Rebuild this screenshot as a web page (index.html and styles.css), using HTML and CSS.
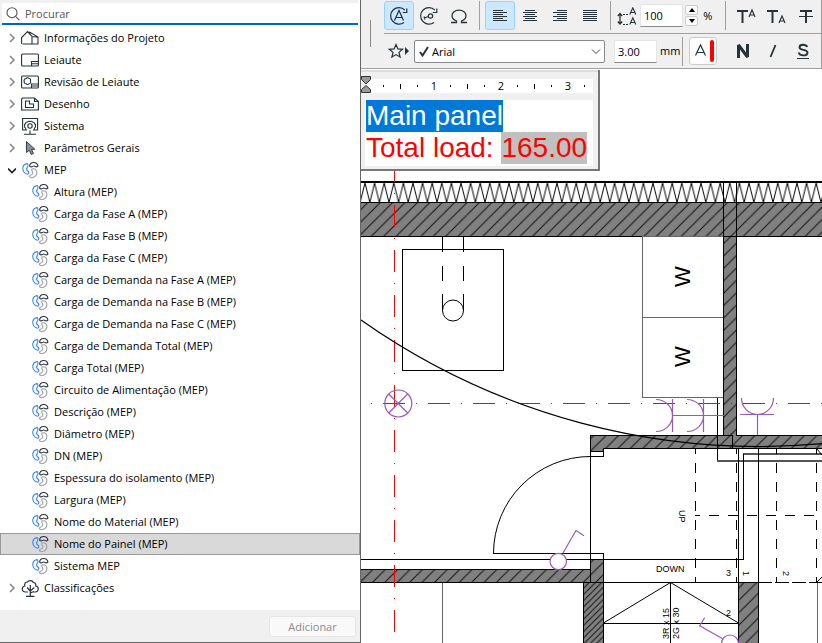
FILE: index.html
```html
<!DOCTYPE html>
<html lang="pt-BR">
<head>
<meta charset="utf-8">
<title>Texto automático</title>
<link rel="stylesheet" href="styles.css">
</head>
<body>
<svg class="defs" aria-hidden="true">
  <symbol id="chev" viewBox="0 0 8 10"><path d="M2 1l4 4-4 4" fill="none" stroke="#8a8a8a" stroke-width="1.6"/></symbol>
  <symbol id="mep" viewBox="0 0 18 18" fill="none" stroke-width="1.1">
    <path d="M6 2.600C3 3.200 1.600 5.500 1.800 8c.3 2.800 2.300 4.700 5 5.200 1-.6 1.200-1.800.6-2.800C5.800 9.500 5.200 8.300 5.900 7c1-1.500 1.500-2.500 1-3.600-.2-.5-.5-.8-.9-.8z" stroke="#3b82f6"/>
    <path d="M8.600 5.200C8.800 2.900 10.500 1.500 12.700 1.500S16.500 2.900 16.900 5.200c-1 .9-2 .9-3 .2-.8-.5-1.500-.5-2.300 0-1.100.7-2.100.7-3-.2z" stroke="#263238"/>
    <path d="M10.800 8c2-.8 4.500.2 5 2.700.6 2.800-1.500 5.800-5 6-1.300 0-2.300-.6-2.500-1.600.3-.9 1.200-1.100 2.200-1.300 1.200-.5 1.600-1.300 1.300-2.300-.3-1-1.500-2-1-3.500z" stroke="#a0a0a0"/>
  </symbol>
</svg>
<main class="app">
  <aside class="panel">
    <label class="search">
      <svg width="14" height="14" viewBox="0 0 14 14" fill="none" stroke="#555" stroke-width="1.100"><circle cx="6" cy="5.700" r="5"/><path d="M9.500 9.300l3.800 3.900"/></svg>
      <input type="text" placeholder="Procurar" aria-label="Procurar">
    </label>
    <ul class="tree">
      <li><button class="row"><svg class="chev"><use href="#chev"/></svg><svg class="ico" viewBox="0 0 18 18" fill="none" stroke="#263238" stroke-width="1.100"><path d="M.6 15V8.500L6.500 2.600 11 7.500V15H1.500M11 15h6V8L9 3.300H6.500M11 7.500L8 3.500M11 7.500l6 .8"/></svg>Informações do Projeto</button></li>
      <li><button class="row"><svg class="chev"><use href="#chev"/></svg><svg class="ico" viewBox="0 0 18 18" fill="none" stroke="#263238" stroke-width="1.100"><rect x=".6" y="3" width="16.800" height="12" rx="1"/><path d="M10.500 15v-4.500H17M10.500 12.700H17"/></svg>Leiaute</button></li>
      <li><button class="row"><svg class="chev"><use href="#chev"/></svg><svg class="ico" viewBox="0 0 18 18" fill="none" stroke="#263238" stroke-width="1.100"><rect x=".6" y="3" width="16.800" height="12" rx="1"/><path d="M10.500 15v-4H17M10.500 13H17M5 5.500c1-1 2.500-1 3.200 0 1 0 1.800 1.200 1.200 2.500.8 1.200 0 2.500-1.300 2.700-.7 1.100-2.400 1.100-3 .1C3.500 10.800 2.800 9.500 3.300 8.300 2.600 7 3.500 5.500 5 5.500z"/></svg>Revisão de Leiaute</button></li>
      <li><button class="row"><svg class="chev"><use href="#chev"/></svg><svg class="ico" viewBox="0 0 18 18" fill="none" stroke="#263238" stroke-width="1.100"><path d="M1.600 3h11.800l4 3.500V15H.6V4zM13.500 3v3.500h3.900M4.500 6h4v3h4v3.500h-8z"/></svg>Desenho</button></li>
      <li><button class="row"><svg class="chev"><use href="#chev"/></svg><svg class="ico" viewBox="0 0 18 18" fill="none" stroke="#263238" stroke-width="1.100"><path d="M5 13H1.600V1.500h15V13H13M9 13.500v3.500M3 17.300h12"/><circle cx="9" cy="9" r="2.200"/><path d="M6 13.200c-1.200-.2-1.600-1-1.400-2-1-.6-1.400-1.400-.9-2.400-.5-1-.1-1.900.9-2.200.1-1.100.8-1.700 1.900-1.500.6-.9 1.600-1.200 2.500-.6.900-.6 1.900-.3 2.500.6 1.100-.2 1.800.4 1.900 1.500 1 .3 1.400 1.200.9 2.200.5 1 .1 1.800-.9 2.400.2 1-.2 1.800-1.400 2"/></svg>Sistema</button></li>
      <li><button class="row"><svg class="chev"><use href="#chev"/></svg><svg class="ico" viewBox="0 0 18 18" fill="#8a8f94" stroke="#3a4248" stroke-width="1"><path d="M5.500 2.500v11l2.700-2.300 2 4.300 2.300-1-2-4.200h3.400z"/></svg>Parâmetros Gerais</button></li>
      <li><button class="row" aria-expanded="true"><svg class="chev" viewBox="0 0 8 10"><path d="M0 3.500l4 4 4-4" fill="none" stroke="#222" stroke-width="1.700"/></svg><svg class="ico"><use href="#mep"/></svg>MEP</button>
        <ul class="sub">
          <li><button class="row"><svg class="ico"><use href="#mep"/></svg>Altura (MEP)</button></li>
          <li><button class="row"><svg class="ico"><use href="#mep"/></svg>Carga da Fase A (MEP)</button></li>
          <li><button class="row"><svg class="ico"><use href="#mep"/></svg>Carga da Fase B (MEP)</button></li>
          <li><button class="row"><svg class="ico"><use href="#mep"/></svg>Carga da Fase C (MEP)</button></li>
          <li><button class="row"><svg class="ico"><use href="#mep"/></svg>Carga de Demanda na Fase A (MEP)</button></li>
          <li><button class="row"><svg class="ico"><use href="#mep"/></svg>Carga de Demanda na Fase B (MEP)</button></li>
          <li><button class="row"><svg class="ico"><use href="#mep"/></svg>Carga de Demanda na Fase C (MEP)</button></li>
          <li><button class="row"><svg class="ico"><use href="#mep"/></svg>Carga de Demanda Total (MEP)</button></li>
          <li><button class="row"><svg class="ico"><use href="#mep"/></svg>Carga Total (MEP)</button></li>
          <li><button class="row"><svg class="ico"><use href="#mep"/></svg>Circuito de Alimentação (MEP)</button></li>
          <li><button class="row"><svg class="ico"><use href="#mep"/></svg>Descrição (MEP)</button></li>
          <li><button class="row"><svg class="ico"><use href="#mep"/></svg>Diâmetro (MEP)</button></li>
          <li><button class="row"><svg class="ico"><use href="#mep"/></svg>DN (MEP)</button></li>
          <li><button class="row"><svg class="ico"><use href="#mep"/></svg>Espessura do isolamento (MEP)</button></li>
          <li><button class="row"><svg class="ico"><use href="#mep"/></svg>Largura (MEP)</button></li>
          <li><button class="row"><svg class="ico"><use href="#mep"/></svg>Nome do Material (MEP)</button></li>
          <li><button class="row selected"><svg class="ico"><use href="#mep"/></svg>Nome do Painel (MEP)</button></li>
          <li><button class="row"><svg class="ico"><use href="#mep"/></svg>Sistema MEP</button></li>
        </ul>
      </li>
      <li><button class="row"><svg class="chev"><use href="#chev"/></svg><svg class="ico" viewBox="0 0 18 18" fill="none" stroke="#263238" stroke-width="1.200"><path d="M7 13H4.500C2.500 13 1.300 11.700 1.300 10S2.500 7.200 3.800 7C3 4.500 5 2.800 6.500 3 7.500 1.200 11.500 1.200 12.300 3.500c2 0 3 1.800 2.400 3.500 1.600.2 2.600 1.500 2.600 3s-1.300 3-3 3H11.500M9.300 6v11M5 17.300h8.500M9.300 12L6 8.500M9.300 12l4-3.500M9.300 14l3.500-1.500"/></svg>Classificações</button></li>
    </ul>
    <footer class="foot"><button class="add" disabled>Adicionar</button></footer>
  </aside>

  <section class="work">
    <svg class="plan" viewBox="361 0 461 643" preserveAspectRatio="xMinYMin slice" fill="none" stroke="#000" aria-label="Planta">
      <defs>
        <pattern id="hatch" width="12.400" height="12.400" patternUnits="userSpaceOnUse"><path fill="#808080" stroke="none" d="M0 0h13v13H0z"/><path stroke="#111" d="M-1 13.400L13.400-1M-1 1L1-1M11.400 13.400l2-2"/></pattern>
        <pattern id="dense" width="6.200" height="6.200" patternUnits="userSpaceOnUse"><path fill="#808080" stroke="none" d="M0 0h7v7H0z"/><path stroke="#111" d="M-1 7.200L7.200-1M-1 1L1-1M5.200 7.200l2-2"/></pattern>
        <pattern id="insul" x="360.200" y="183" width="9.600" height="20" patternUnits="userSpaceOnUse"><path stroke="#000" stroke-linejoin="bevel" d="M-4.800 0L0 19.500 4.800 0l4.800 19.500L14.400 0"/></pattern>
      </defs>
      <path fill="url(#insul)" stroke="none" d="M361 183h461v19.500H361z"/>
      <path stroke-width="2" d="M361 182h461"/>
      <path fill="url(#hatch)" stroke="none" d="M361 203h461v33H361z"/>
      <path fill="url(#hatch)" stroke="none" d="M723 236h13v200h-13zM590 435h232v13H603v3h-13zM361 570h230v-11h12v23H361zM738 582h20v61h-20z"/>
      <path fill="url(#dense)" stroke="none" d="M583 583h20v60h-20z"/>
      <g shape-rendering="crispEdges">
        <path d="M361 202.500h461M361 236.500h461M723.500 182v254M736.500 182v254"/>
        <path d="M402.500 249.500h101v121h-101zM442.500 237v15m0 14v15m0 13v17M463.500 237v15m0 14v15m0 13v17"/>
        <path stroke="#666" d="M723 236.500h-80.500v161H723M642.500 317.500H723M442.500 583v60M817.500 583v60"/>
        <path d="M717.500 398v62M590.500 435.500h133M736.500 435.500H822M603 448.500h219M732.500 435v13M723 435.500h9M590.500 435v148M590 451.500h13.500M590 456.500h13.500M603.500 448v8"/>
        <path stroke="#555" stroke-width="2" d="M717 461h105M743 454h79"/>
        <path d="M743.500 454v105.500H603M738.500 448v195M758.500 448v195M493 553.500h110.500V643M591 559.500h12M361 559.500h230M361 569.500h230M361 582.500h398M583.500 582v61M603 623.500h135.500M670.500 582v61"/>
        <path stroke-dasharray="10 9" stroke-dashoffset="5" d="M695.500 449v134M736.500 449v134M776.500 449v134M816.500 449v134M695 515.500h127"/>
        <path stroke-dasharray="14 3" d="M758 582.500h64"/>
        <path stroke="#f00" stroke-dasharray="1 11 22 11" d="M371 403.500h451"/>
        <path stroke="#f00" stroke-dasharray="22 11 1 11" stroke-dashoffset="11" d="M394.500 171v462"/>
      </g>
      <circle cx="453" cy="310.500" r="10.500"/>
      <path stroke-width="1.200" d="M361 320A692.500 692.500 0 0 0 822 443.700"/>
      <path d="M590.500 456.500A97 97 0 0 0 493.500 553.500M603.500 623l67-40.500 68 40.500M817 449l5 6M817 582l5-5"/>
      <g stroke="#9b59b6" stroke-width="1.200">
        <circle cx="398.300" cy="403.500" r="13.500"/>
        <path d="M388.700 394l19 19m0-19l-19 19"/>
        <path d="M656 399.500A16.500 16 0 0 1 672.500 415.500 16.500 16 0 0 1 656 431.500M687 399.500A16.500 16 0 0 1 703.500 415.500 16.500 16 0 0 1 687 431.500M672.500 399v33M703.500 399v33M672.500 415.500H724M741.500 398A16 16.500 0 0 0 757.500 414.500 16 16.500 0 0 0 773.500 398M740 414.500h34M757.500 414.500V435"/>
        <circle cx="558.300" cy="561.500" r="8.200" fill="#fff"/>
        <path d="M562.700 553.500l13.300-23 8 5.200M722.700 638.700l-23-13 5-8"/>
        <circle cx="730" cy="643.500" r="8.500"/>
      </g>
      <g class="note">
        <text class="big" transform="translate(690 287) rotate(-90)">W</text>
        <text class="big" transform="translate(690 367) rotate(-90)">W</text>
        <text x="656" y="572">DOWN</text>
        <text transform="translate(679 510) rotate(90)">UP</text>
        <text x="726" y="576">3</text>
        <text x="726" y="616">2</text>
        <text transform="translate(743 571) rotate(90)">1</text>
        <text transform="translate(783 571) rotate(90)">2</text>
        <text transform="translate(669 639) rotate(-90)">3R x 15</text>
        <text transform="translate(679 639) rotate(-90)">2G x 30</text>
      </g>
    </svg>

    <div class="toolbar">
      <span class="grip"></span>
      <div class="lines">
        <div class="line first">
          <button class="tool on" aria-label="Girar texto"><svg width="20" height="20" viewBox="0 0 20 20" fill="none" stroke="#263238" stroke-width="1.200"><path d="M15.800 4A8.300 8.300 0 1 0 15 16.500M5.500 14.500L10 4.500l4.500 10M7 11.500h6M17.800 2.500v4h-4"/></svg></button>
          <button class="tool" aria-label="Girar símbolo"><svg width="20" height="20" viewBox="0 0 20 20" fill="none" stroke="#263238" stroke-width="1.200"><path d="M15.800 4A8.300 8.300 0 1 0 15 16.500M17.800 2.500v4h-4M5 12l4.500-1.500M5 10.500l1 3"/><circle cx="11.500" cy="10" r="2.200"/></svg></button>
          <button class="tool" aria-label="Símbolo"><svg width="20" height="20" viewBox="0 0 20 20" fill="none" stroke="#263238" stroke-width="1.300"><path d="M2 16.500h5.500V15C4.500 13.800 3 12 3 9.700c0-3.200 3-5.500 7-5.500s7 2.300 7 5.500c0 2.300-1.500 4.100-4.500 5.300v1.500H18"/></svg></button>
          <i class="sep"></i>
          <button class="tool on" aria-label="Esquerda"><svg width="16" height="14" stroke="#263238"><path d="M1 1.500h10M1 3.500h14M1 5.500h10M1 7.500h14M1 9.500h10M1 11.500h14"/></svg></button>
          <button class="tool" aria-label="Centro"><svg width="16" height="14" stroke="#263238"><path d="M3 1.500h10M1 3.500h14M3 5.500h10M1 7.500h14M3 9.500h10M1 11.500h14"/></svg></button>
          <button class="tool" aria-label="Direita"><svg width="16" height="14" stroke="#263238"><path d="M5 1.500h10M1 3.500h14M5 5.500h10M1 7.500h14M5 9.500h10M1 11.500h14"/></svg></button>
          <button class="tool" aria-label="Justificar"><svg width="16" height="14" stroke="#263238"><path d="M1 1.500h14M1 3.500h14M1 5.500h14M1 7.500h14M1 9.500h14M1 11.500h14"/></svg></button>
          <i class="sep"></i>
          <svg class="lead" width="20" height="18" viewBox="0 0 20 18" fill="none" stroke="#263238"><path stroke-width="1.300" d="M3 7v10M.8 9L3 6.500 5.200 9M.8 14.500L3 17l2.200-2.500"/><path stroke-dasharray="2 1" d="M6 7.500h6M6 17.500h6"/><path stroke-width="1.100" d="M12.800 7.500L15.800.8l3 6.700M13.800 5.500h4M12.800 17.500l3-6.700 3 6.700M13.800 15.500h4"/></svg>
          <input class="num" type="text" value="100" aria-label="Espaçamento">
          <span class="spin"><button aria-label="Aumentar"><svg width="6" height="4"><path d="M0 4l3-4 3 4z"/></svg></button><button aria-label="Diminuir"><svg width="6" height="4"><path d="M0 0l3 4 3-4z"/></svg></button></span>
          <span class="unit">%</span>
          <i class="sep"></i>
          <button class="tool style" aria-label="Sobrescrito"><svg width="20" height="16" viewBox="0 0 20 16" fill="none" stroke="#263238"><path stroke-width="2" d="M1 3h11M6.500 3v12"/><path stroke-width="1.200" d="M13 9l3-7 3 7M14 7h4"/></svg></button>
          <button class="tool style" aria-label="Subscrito"><svg width="20" height="16" viewBox="0 0 20 16" fill="none" stroke="#263238"><path stroke-width="2" d="M1 3h11M6.500 3v12"/><path stroke-width="1.200" d="M13 15l3-7 3 7M14 13h4"/></svg></button>
          <button class="tool style" aria-label="Tachado"><svg width="16" height="16" viewBox="0 0 16 16" fill="none" stroke="#263238"><path stroke-width="2" d="M2 3h12M8 3v12"/><path d="M1 8.500h14"/></svg></button>
        </div>
        <div class="line second">
          <button class="tool" aria-label="Favoritos"><svg width="22" height="16" viewBox="0 0 22 16" fill="none" stroke="#263238"><path stroke-width="1.200" d="M8 1.500l1.900 4.400 4.700.4-3.600 3.100 1.100 4.700L8 11.600l-4.100 2.500L5 9.400 1.400 6.300l4.700-.4z"/><path fill="#263238" stroke="none" d="M17 4l4 4-4 4z"/></svg></button>
          <span class="font">
            <svg class="check" width="10" height="11" viewBox="0 0 10 11" fill="none" stroke="#263238" stroke-width="2"><path d="M1 6l2.500 3.500L9 1"/></svg>
            <select aria-label="Fonte"><option>Arial</option></select>
            <svg class="drop" width="10" height="6" viewBox="0 0 10 6" fill="none" stroke="#444"><path d="M1 .5l4 4 4-4"/></svg>
          </span>
          <input class="num" type="text" value="3.00" aria-label="Altura">
          <span class="unit">mm</span>
          <i class="sep"></i>
          <button class="pen" aria-label="Cor da caneta"><svg width="26" height="26" viewBox="0 0 26 26" fill="none" stroke="#263238"><path stroke-width="1.200" d="M5.500 17.500L10.500 7l5 10.500M7 14.500h7"/><path stroke="#f00" stroke-width="4" stroke-linecap="round" d="M22 4v18"/></svg></button>
          <button class="tool style" aria-label="Negrito"><svg width="16" height="16" viewBox="0 0 16 16" fill="none" stroke="#263238"><path stroke-width="3" stroke-linejoin="bevel" d="M3.500 15V2l9 12V1"/></svg></button>
          <button class="tool style" aria-label="Itálico"><svg width="16" height="16" viewBox="0 0 16 16" fill="none" stroke="#263238"><path stroke-width="1.800" d="M10.500 2l-5 12"/></svg></button>
          <button class="tool style" aria-label="Sublinhado"><svg width="16" height="18" viewBox="0 0 16 18" fill="none" stroke="#263238"><path stroke-width="1.900" d="M12.200 5C11.500 3.300 10 2.800 8.200 2.800 6 2.800 4.500 3.700 4.500 5.300c0 3.600 8 1.600 8 5.400 0 1.700-1.700 2.700-4.200 2.700-2.300 0-4-.9-4.600-2.900"/><path d="M2 16.500h12"/></svg></button>
        </div>
      </div>
    </div>

    <div class="editor">
      <div class="ruler">
        <svg class="stop" width="10" height="18" viewBox="0 0 10 18" fill="#999" stroke="#333"><path d="M.5.5h9v3L5 8 .5 3.500zM.5 16.500h9v-3L5 9.500.5 13.500z"/></svg>
        <span></span><b></b><span></span><em>1</em><span></span><b></b><span></span><em>2</em><span></span><b></b><span></span><em>3</em><span></span>
      </div>
      <div class="ticks"><i></i><i></i><i></i></div>
      <div class="text" contenteditable="true" spellcheck="false"><p><mark>Main panel</mark></p><p>Total load: <span class="field">165.00</span></p></div>
    </div>
  </section>
</main>
</body>
</html>
```
FILE: styles.css
```css
* { box-sizing: border-box; }
body { margin: 0; font: 11px/22px "Open Sans", "Noto Sans", sans-serif; color: #000; background: #fff; }
button, input, select { font: inherit; color: inherit; margin: 0; padding: 0; border: 0; background: none; }
ul { list-style: none; margin: 0; padding: 0; }
svg { display: block; flex: none; }
.defs { position: absolute; width: 0; height: 0; }
.app { display: flex; min-height: 100vh; }

/* property tree */
.panel { flex: 0 0 361px; display: flex; flex-direction: column; border-right: 1px solid #666; border-bottom: 1px solid #666; }
.search { display: flex; align-items: center; gap: 5px; height: 25px; margin-right: 2px; padding: 0 4px; border: solid #f0f0f0; border-width: 3px 0 0 2px; position: relative; }
.search::after { content: ""; position: absolute; inset: auto 0 0 0; height: 2px; background: #0067c0; }
.search input { flex: 1; min-width: 0; outline: 0; height: 20px; }
.search input::placeholder { color: #555; opacity: 1; }
.tree { flex: 1; padding: 2px 0 11px; }
.row { display: flex; align-items: center; width: 100%; height: 22px; padding: 0 0 0 7px; border: 1px solid transparent; white-space: nowrap; text-align: left; }
.chev { width: 8px; height: 10px; margin-right: 5px; }
.ico { width: 18px; height: 18px; margin-right: 5px; }
.sub .row { padding-left: 30px; }
.row.selected { background: #d9d9d9; border-color: #999; }
.foot { background: #f0f0f0; padding: 6px 4px 5px; display: flex; justify-content: flex-end; }
.add { width: 87px; height: 21px; line-height: 18px; border: 1px solid #e5e5e5; border-radius: 3px; background: #f9f9f9; color: #8c8c8c; }

/* drawing and text tools */
.work { flex: 1; min-width: 0; position: relative; }
.plan { position: absolute; inset: 0; width: 100%; height: 100%; }
.note { font: 9px "Liberation Sans", sans-serif; fill: #000; stroke: none; }
.note .big { font-size: 22px; }
.toolbar { position: relative; display: flex; background: #f0f0f0; border: solid #a0a0a0; border-width: 0 1px 1px 0; }
.grip { width: 1px; height: 27px; margin: 20px 13px 0 9px; background: #888; }
.lines { flex: 1; min-width: 0; }
.line { display: flex; align-items: center; height: 34px; }
.first { border-bottom: 1px solid #a0a0a0; padding-bottom: 2px; }
.second { padding-right: 3px; }
.tool { flex: none; width: 30px; height: 29px; display: grid; place-items: center; border: 1px solid transparent; border-radius: 3px; }
.tool.on { background: #cce8ff; border-color: #99d1ff; }
.sep { flex: none; width: 1px; height: 29px; margin: 0 5px; background: #a0a0a0; }
.lead { margin: 0 3px 0 1px; }
.num { width: 43px; height: 23px; padding: 0 3px; background: #fff; border: 1px solid #e5e5e5; border-bottom-color: #888; outline: 0; }
.spin { width: 14px; margin: 0 4px 0 2px; display: grid; gap: 1px; }
.spin button { height: 10px; display: grid; place-items: center; border: 1px solid #ccc; background: #fafafa; border-radius: 2px; }
.unit { width: 19px; padding-left: 1px; }
.second .unit { padding-left: 3px; width: 21px; }
.second .sep { margin: 0 6px 0 4px; }
.font { position: relative; flex: 1; height: 23px; margin-right: 9px; }
.font select { appearance: none; width: 100%; height: 23px; padding: 0 17px; border: 1px solid #888; border-radius: 2px; background: #fff; }
.check { position: absolute; left: 5px; top: 6px; }
.drop { position: absolute; right: 4px; top: 9px; }
.pen { flex: none; width: 28px; height: 28px; margin-right: 11px; border: 1px solid #ccc; border-radius: 3px; background: #fdfdfd; }
.editor { position: relative; width: 239px; margin-top: 1px; padding: 9px 5px 3px 4px; background: #f0f0f0; border: solid #777; border-width: 0 2px 2px 0; box-shadow: inset 0 2px #ddd; }
.ruler { position: relative; height: 14px; padding-left: 10px; background: #fff; display: flex; align-items: center; }
.stop { position: absolute; left: -4px; top: -3px; }
.ruler > * { flex: none; }
.ruler span, .ruler b, .ruler em { width: 17px; display: grid; place-items: center; font-style: normal; line-height: 14px; }
.ruler em { width: 16px; }
.ruler span::before { content: ""; width: 1px; height: 2px; background: #000; }
.ruler b::before { content: ""; width: 1px; height: 5px; background: #000; }
.ticks { display: flex; gap: 84px; height: 7px; padding-left: 86px; }
.ticks i { width: 1px; height: 3px; background: #999; }
.text { background: #fff; height: 66px; padding-left: 1px; font: 28px/32px "Liberation Sans", sans-serif; color: #f00; outline: 0; white-space: nowrap; }
.text p { margin: 0; height: 32px; }
.text mark { display: inline-block; background: #0078d7; color: #fff; }
.field { display: inline-block; background: #c0c0c0; }
```
